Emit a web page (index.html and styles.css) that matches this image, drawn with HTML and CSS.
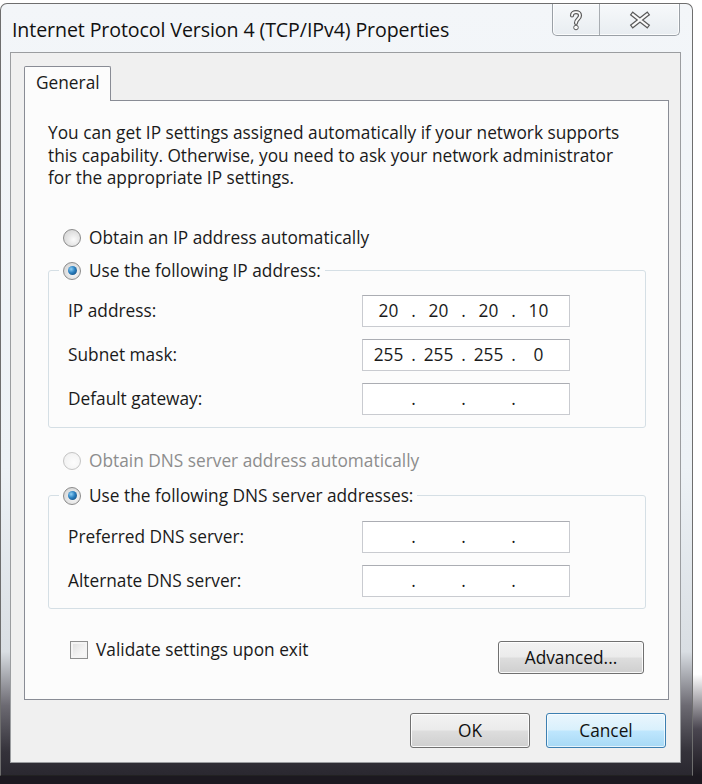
FILE: index.html
```html
<!DOCTYPE html>
<html>
<head>
<meta charset="utf-8">
<link rel="stylesheet" href="styles.css">
</head>
<body>
<div class="window">
  <div class="titlebar">
    <span class="title">Internet Protocol Version 4 (TCP/IPv4) Properties</span>
    <div class="caption-buttons">
      <div class="cap-btn help">
        <svg width="14" height="22" viewBox="0 0 14 22">
          <path d="M3 6.5 C3 2 11 2 11 6.5 C11 10 7 10 7 14" fill="none" stroke="#5a5a5a" stroke-width="4.2" stroke-linecap="round"/>
          <path d="M3 6.5 C3 2 11 2 11 6.5 C11 10 7 10 7 14" fill="none" stroke="#fafafa" stroke-width="1.8" stroke-linecap="round"/>
          <circle cx="7" cy="18.5" r="2.3" fill="#fafafa" stroke="#5a5a5a" stroke-width="1"/>
        </svg>
      </div>
      <div class="cap-btn close">
        <svg width="22" height="18" viewBox="0 0 22 18">
          <path d="M4 3.5 L18 14.5 M18 3.5 L4 14.5" stroke="#5a5a5a" stroke-width="4.6" stroke-linecap="square"/>
          <path d="M4 3.5 L18 14.5 M18 3.5 L4 14.5" stroke="#fafafa" stroke-width="2.2" stroke-linecap="square"/>
        </svg>
      </div>
    </div>
  </div>
  <div class="client">
    <div class="tabs"><div class="tab">General</div></div>
    <div class="tabpanel">
      <p class="intro">You can get IP settings assigned automatically if your network supports this capability. Otherwise, you need to ask your network administrator for the appropriate IP settings.</p>
      <div class="option first"><span class="radio"></span><span>Obtain an IP address automatically</span></div>
      <fieldset class="group ipgroup">
        <legend><span class="radio checked"></span><span>Use the following IP address:</span></legend>
        <div class="rows">
          <span class="lbl">IP address:</span>
          <div class="ipfield"><span class="oct">20</span><span class="dot">.</span><span class="oct">20</span><span class="dot">.</span><span class="oct">20</span><span class="dot">.</span><span class="oct">10</span></div>
          <span class="lbl">Subnet mask:</span>
          <div class="ipfield"><span class="oct">255</span><span class="dot">.</span><span class="oct">255</span><span class="dot">.</span><span class="oct">255</span><span class="dot">.</span><span class="oct">0</span></div>
          <span class="lbl">Default gateway:</span>
          <div class="ipfield"><span class="oct"></span><span class="dot">.</span><span class="oct"></span><span class="dot">.</span><span class="oct"></span><span class="dot">.</span><span class="oct"></span></div>
        </div>
      </fieldset>
      <div class="option disabled"><span class="radio"></span><span>Obtain DNS server address automatically</span></div>
      <fieldset class="group dnsgroup">
        <legend><span class="radio checked"></span><span>Use the following DNS server addresses:</span></legend>
        <div class="rows">
          <span class="lbl">Preferred DNS server:</span>
          <div class="ipfield"><span class="oct"></span><span class="dot">.</span><span class="oct"></span><span class="dot">.</span><span class="oct"></span><span class="dot">.</span><span class="oct"></span></div>
          <span class="lbl">Alternate DNS server:</span>
          <div class="ipfield"><span class="oct"></span><span class="dot">.</span><span class="oct"></span><span class="dot">.</span><span class="oct"></span><span class="dot">.</span><span class="oct"></span></div>
        </div>
      </fieldset>
      <div class="bottom-row">
        <div class="check-row"><span class="checkbox"></span><span>Validate settings upon exit</span></div>
        <div class="btn advanced">Advanced...</div>
      </div>
    </div>
    <div class="footer">
      <div class="btn ok">OK</div>
      <div class="btn cancel">Cancel</div>
    </div>
  </div>
</div>
</body>
</html>
```
FILE: styles.css
```css
html {
  background: linear-gradient(to bottom, #ffffff 0%, #ffffff 86%, #4a4650 93%, #1c1920 99%);
  height: 784px;
}
body {
  margin: 0;
  width: 702px;
  height: 784px;
  overflow: hidden;
  font-family: "Open Sans", "Noto Sans", sans-serif;
  font-size: 17.3px;
  color: #1a1a1a;
}
.window {
  margin-top: 3px;
  width: 693px;
  height: 773px;
  box-sizing: border-box;
  border: 1px solid #6e6e6e;
  border-bottom-color: #222;
  border-radius: 7px 7px 0 0;
  padding: 0 11px 0 9px;
  display: flex;
  flex-direction: column;
  background: linear-gradient(to bottom, #f3f6f9 0%, #edf2f6 60%, #d9dee3 84%, #6c6a72 91%, #34323a 97%, #2a2830 100%);
}
.titlebar {
  height: 48px;
  display: flex;
  justify-content: space-between;
  align-items: flex-start;
}
.title {
  margin: 12px 0 0 2px;
  font-size: 19.6px;
  color: #111;
  letter-spacing: -0.1px;
}
.caption-buttons {
  display: flex;
  margin-right: 1px;
  border: 1px solid #9aa0a6;
  border-top: none;
  border-radius: 0 0 5px 5px;
  background: linear-gradient(to bottom, #f7f9fb, #e8edf1);
  height: 31px;
  box-shadow: inset 0 0 0 1px rgba(255,255,255,0.8);
}
.cap-btn {
  display: flex;
  align-items: center;
  justify-content: center;
}
.cap-btn.help {
  width: 46px;
  border-right: 1px solid #a8adb2;
}
.cap-btn.close {
  width: 79px;
}
.client {
  height: 711px;
  box-sizing: border-box;
  border: 1px solid #9b9da0;
  background: #f0f0f0;
  padding: 13px 13px 0 13px;
  display: flex;
  flex-direction: column;
}
.tabs {
  display: flex;
  height: 34px;
}
.tab {
  width: 87px;
  box-sizing: border-box;
  border: 1px solid #898c95;
  border-bottom: none;
  background: #fcfcfc;
  padding-left: 11px;
  line-height: 32px;
  margin-bottom: -1px;
  position: relative;
  z-index: 1;
  border-radius: 2px 2px 0 0;
}
.tabpanel {
  height: 600px;
  width: 645px;
  box-sizing: border-box;
  border: 1px solid #898c95;
  background: #fcfcfc;
  padding: 0 22px 0 23px;
  display: flex;
  flex-direction: column;
}
.intro {
  margin: 21px 0 0 0;
  line-height: 22.5px;
  width: 590px;
}
.option {
  display: flex;
  align-items: center;
  height: 26px;
  padding-left: 15px;
}
.option.first {
  margin-top: 35px;
}
.option.disabled {
  margin-top: 20px;
  color: #8d8d8d;
}
.radio {
  width: 18px;
  height: 18px;
  box-sizing: border-box;
  border-radius: 50%;
  border: 1px solid #8b8b8b;
  background: radial-gradient(circle at 60% 60%, #fbfbfb 0%, #e1e1e1 55%, #cfcfcf 100%);
  margin-right: 8px;
  display: flex;
  align-items: center;
  justify-content: center;
  flex: none;
}
.option.disabled .radio {
  border-color: #c4c4c4;
  background: radial-gradient(circle at 60% 60%, #fdfdfd 0%, #eeeeee 100%);
}
.radio.checked::after {
  content: "";
  width: 9px;
  height: 9px;
  border-radius: 50%;
  background: radial-gradient(circle at 35% 35%, #8fd0f5 0%, #2a7fbf 45%, #0f3f6e 100%);
}
.group {
  margin: 7px 0 0 0;
  border: 1px solid #d5dfe5;
  border-radius: 3px;
  padding: 11px 20px 12px 19px;
  min-width: 0;
}
.group.dnsgroup {
  margin-top: 9px;
  padding-top: 12px;
  padding-bottom: 11px;
}
.group legend {
  display: flex;
  align-items: center;
  height: 26px;
  padding: 0 4px 0 4px;
  margin-left: -9px;
}
.rows {
  display: grid;
  grid-template-columns: 294px 208px;
  grid-auto-rows: 32px;
  row-gap: 12px;
  align-items: center;
}
.lbl {
  line-height: 32px;
}
.ipfield {
  height: 32px;
  box-sizing: border-box;
  border: 1px solid #c9cbd0;
  border-top-color: #abadb3;
  background: #fff;
  display: flex;
  align-items: center;
  padding-left: 3px;
}
.oct {
  width: 45px;
  text-align: center;
}
.dot {
  width: 5px;
  text-align: center;
}
.bottom-row {
  margin-top: 31px;
  display: flex;
  justify-content: space-between;
  align-items: flex-start;
  padding-left: 22px;
  padding-right: 2px;
}
.check-row {
  display: flex;
  align-items: center;
  height: 20px;
  gap: 8px;
}
.checkbox {
  width: 18px;
  height: 18px;
  box-sizing: border-box;
  border: 1px solid #8e8f8f;
  background: linear-gradient(135deg, #dcdcdc 0%, #f3f3f3 60%, #fbfbfb 100%);
  box-shadow: inset 0 0 0 2px #f4f4f4;
}
.btn {
  box-sizing: border-box;
  border: 1px solid #707070;
  border-radius: 3px;
  background: linear-gradient(to bottom, #f3f3f3 0%, #ebebeb 48%, #dddddd 52%, #cfcfcf 100%);
  box-shadow: inset 0 0 0 1px rgba(255,255,255,0.85);
  display: flex;
  align-items: center;
  justify-content: center;
  color: #111;
}
.advanced {
  width: 146px;
  height: 33px;
  margin-top: 1px;
}
.footer {
  display: flex;
  justify-content: flex-end;
  gap: 16px;
  margin-top: 13px;
  padding-right: 1px;
}
.ok, .cancel {
  width: 120px;
  height: 35px;
}
.cancel {
  border-color: #3c7fb1;
  background: linear-gradient(to bottom, #eaf6fd 0%, #d9f0fc 48%, #bee6fd 52%, #a7d9f5 100%);
  box-shadow: inset 0 0 0 1px rgba(255,255,255,0.7);
}
```
